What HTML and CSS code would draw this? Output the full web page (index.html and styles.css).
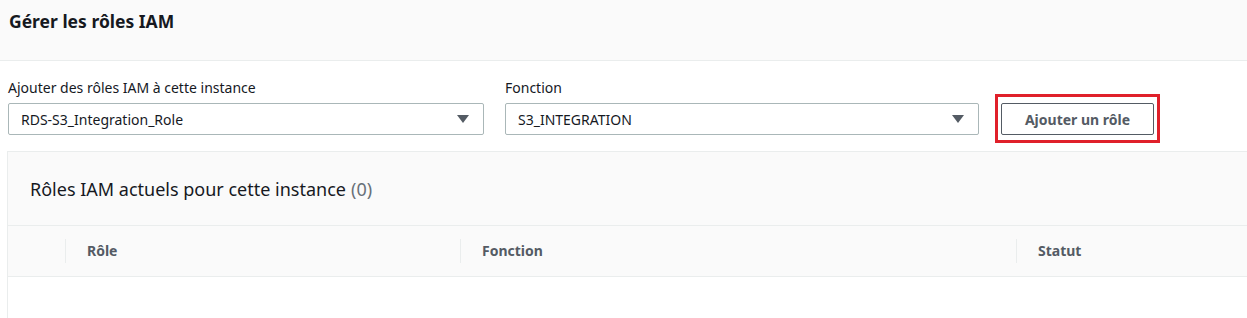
FILE: index.html
```html
<!DOCTYPE html>
<html lang="fr">
<head>
    <meta charset="UTF-8">
    <title>Gérer les rôles IAM</title>
    <link rel="stylesheet" href="styles.css">
</head>
<body>

<div class="entete">
    <h2>Gérer les rôles IAM</h2>
</div>

<div class="formulaire">
    <div class="champ champ-role">
        <label>Ajouter des rôles IAM à cette instance</label>
        <div class="selecteur">
            <span>RDS-S3_Integration_Role</span>
            <svg width="12" height="8" viewBox="0 0 12 8"><path d="M0 0 H12 L6 8 Z" fill="#545b64"/></svg>
        </div>
    </div>
    <div class="champ champ-fonction">
        <label>Fonction</label>
        <div class="selecteur">
            <span>S3_INTEGRATION</span>
            <svg width="12" height="8" viewBox="0 0 12 8"><path d="M0 0 H12 L6 8 Z" fill="#545b64"/></svg>
        </div>
    </div>
    <div class="cadre-rouge">
        <button class="bouton">Ajouter un rôle</button>
    </div>
</div>

<div class="tableau">
    <div class="tableau-titre">
        Rôles IAM actuels pour cette instance <span class="compteur">(0)</span>
    </div>
    <div class="colonnes">
        <div class="col col-vide"></div>
        <div class="col col-role">Rôle</div>
        <div class="col col-fonction">Fonction</div>
        <div class="col col-statut">Statut</div>
    </div>
    <div class="lignes"></div>
</div>

</body>
</html>
```

FILE: styles.css
```css
body {
    font-family: "Noto Sans", "Open Sans", Arial, sans-serif;
    margin: 0;
    padding: 0;
    background-color: white;
    color: #16191f;
    overflow: hidden;
    height: 318px;
}
.entete {
    background-color: #fafafa;
    border-bottom: 1px solid #eaeded;
    height: 61px;
    box-sizing: border-box;
    padding: 8px 9px;
}
.entete h2 {
    margin: 0;
    font-size: 17.5px;
    font-weight: bold;
    line-height: 26px;
}
.formulaire {
    display: flex;
    align-items: flex-end;
    padding: 16px 0 0 8px;
    height: 74px;
    box-sizing: border-box;
}
.champ {
    display: flex;
    flex-direction: column;
}
.champ-role {
    width: 476px;
}
.champ-fonction {
    width: 474px;
    margin-left: 21px;
}
.champ label {
    font-size: 14px;
    line-height: 22px;
    margin-bottom: 4px;
}
.selecteur {
    height: 32px;
    box-sizing: border-box;
    border: 1px solid #aab7b8;
    border-radius: 2px;
    display: flex;
    align-items: center;
    justify-content: space-between;
    padding: 0 14px 0 12px;
    font-size: 14px;
}
.cadre-rouge {
    border: 3px solid #e0202a;
    padding: 6px 3px 5px 3px;
    margin-left: 16px;
    margin-bottom: -8px;
}
.bouton {
    display: block;
    height: 32px;
    width: 153px;
    background-color: white;
    border: 1px solid #545b64;
    border-radius: 2px;
    color: #545b64;
    font-family: inherit;
    font-weight: bold;
    font-size: 14px;
}
.tableau {
    margin: 16px 0 0 7px;
    border-top: 1px solid #eaeded;
    border-left: 1px solid #eaeded;
    height: 166px;
}
.tableau-titre {
    background-color: #fafafa;
    height: 73px;
    border-bottom: 1px solid #eaeded;
    padding-left: 22px;
    display: flex;
    align-items: center;
    font-size: 18px;
}
.compteur {
    color: #687078;
    margin-left: 5px;
}
.colonnes {
    background-color: #fafafa;
    height: 50px;
    border-bottom: 1px solid #eaeded;
    display: flex;
    align-items: center;
}
.col {
    font-size: 14px;
    font-weight: bold;
    color: #545b64;
    height: 24px;
    line-height: 24px;
    box-sizing: border-box;
}
.col-vide {
    width: 57px;
}
.col-role, .col-fonction, .col-statut {
    border-left: 1px solid #eaeded;
    padding-left: 21px;
}
.col-role {
    width: 395px;
}
.col-fonction {
    width: 556px;
}
.col-statut {
    flex: 1;
}
```
